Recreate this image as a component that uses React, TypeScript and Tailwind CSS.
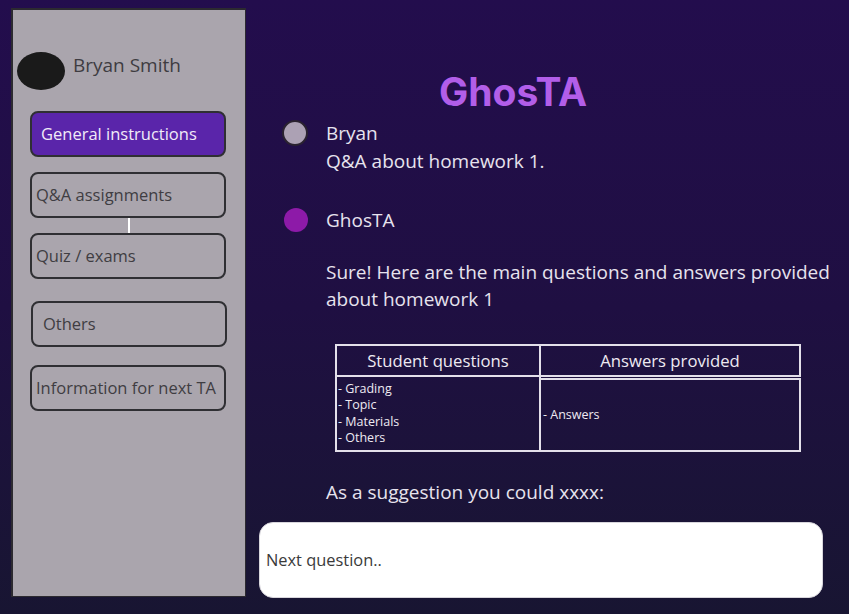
import React from "react";

const font = { fontFamily: '"Open Sans", "Noto Sans", sans-serif' };

function NavButton({
  label,
  active,
  pl,
  ml,
}: {
  label: string;
  active?: boolean;
  pl: string;
  ml: string;
}) {
  return (
    <div
      className={
        "w-[196px] h-[46px] rounded-[8px] border-2 border-[#2f2f33] flex items-center text-[16.5px] " +
        pl +
        " " +
        ml +
        (active ? " bg-[#5a25aa] text-[#f1ebf8]" : " text-[#3f3d42]")
      }
    >
      {label}
    </div>
  );
}

export default function App() {
  return (
    <div
      className="w-[849px] h-[614px] flex bg-gradient-to-b from-[#230d4d] via-[#1f0f42] to-[#181532] overflow-hidden"
      style={font}
    >
      {/* Sidebar */}
      <div className="shrink-0 ml-[11px] mt-[8px] w-[235px] h-[589px] bg-[#aaa5ad] border-t-2 border-l-2 border-r border-b border-[#2c2a30] flex flex-col">
        <div className="flex items-start mt-[42px] ml-[4px]">
          <div className="w-[48px] h-[38px] rounded-[50%] bg-[#1a1a1a] shrink-0" />
          <div className="ml-[8px] -mt-[1px] text-[19px] text-[#3e3c41] leading-[28px]">
            Bryan Smith
          </div>
        </div>
        <div className="mt-[21px] flex flex-col">
          <NavButton label="General instructions" active pl="pl-[9px]" ml="ml-[17px]" />
          <div className="h-[15px]" />
          <NavButton label="Q&A assignments" pl="pl-[4px]" ml="ml-[17px]" />
          <div className="h-[15px] ml-[115px] w-[2px] bg-white" />
          <NavButton label="Quiz / exams" pl="pl-[4px]" ml="ml-[17px]" />
          <div className="h-[22px]" />
          <NavButton label="Others" pl="pl-[10px]" ml="ml-[18px]" />
          <div className="h-[18px]" />
          <NavButton label="Information for next TA" pl="pl-[4px]" ml="ml-[17px]" />
        </div>
      </div>

      {/* Main */}
      <div className="flex-1 min-w-0 flex flex-col text-[#e7e3ee]">
        <div
          className="mt-[72px] h-[40px] leading-[40px] pl-[193px] text-[39px] font-bold text-[#b25ee9]"
          style={{ fontFamily: 'Inter, "Liberation Sans", sans-serif' }}
        >
          GhosTA
        </div>

        {/* Message 1 */}
        <div className="mt-[7px] flex items-start">
          <div className="ml-[36px] mt-[1px] w-[26px] h-[26px] rounded-full bg-[#aca1b4] border-2 border-[#2a2230] shrink-0" />
          <div className="ml-[18px] text-[19px] leading-[28px]">
            <div>Bryan</div>
            <div>Q&amp;A about homework 1.</div>
          </div>
        </div>

        {/* Message 2 */}
        <div className="mt-[31px] flex items-start">
          <div className="ml-[38px] mt-[2px] w-[24px] h-[24px] rounded-full bg-[#8d1aa8] shrink-0" />
          <div className="ml-[18px] text-[19px] leading-[28px]">GhosTA</div>
        </div>

        <div className="mt-[25px] ml-[80px] text-[19px] leading-[27px] w-[515px]">
          Sure! Here are the main questions and answers provided about homework 1
        </div>

        {/* Table */}
        <div className="mt-[31px] ml-[89px] w-[466px] grid grid-cols-[206px_260px] text-[#eeeaf2]">
          <div className="h-[33px] border-2 border-[#e4e0ea] flex items-center justify-center text-[16.7px]">
            Student questions
          </div>
          <div className="h-[33px] border-2 border-l-0 border-[#e4e0ea] flex items-center justify-center text-[16.7px]">
            Answers provided
          </div>
          <div className="h-[75px] border-2 border-t-0 border-[#e4e0ea] flex flex-col justify-center pl-[1px] text-[12.5px] leading-[16.3px]">
            <div>- Grading</div>
            <div>- Topic</div>
            <div>- Materials</div>
            <div>- Others</div>
          </div>
          <div className="border-2 border-l-0 border-[#e4e0ea] mt-[1px] h-[74px] flex items-center pl-[2px] text-[12.5px]">
            - Answers
          </div>
        </div>

        <div className="mt-[26px] ml-[80px] text-[19px] leading-[28px]">
          As a suggestion you could xxxx:
        </div>

        {/* Input */}
        <div className="mt-[16px] ml-[13px] w-[564px] h-[76px] rounded-[14px] bg-white border border-[#d8d6dc] flex items-center pl-[6px] text-[16.4px] text-[#3a3a3a]">
          Next question..
        </div>
      </div>
    </div>
  );
}
